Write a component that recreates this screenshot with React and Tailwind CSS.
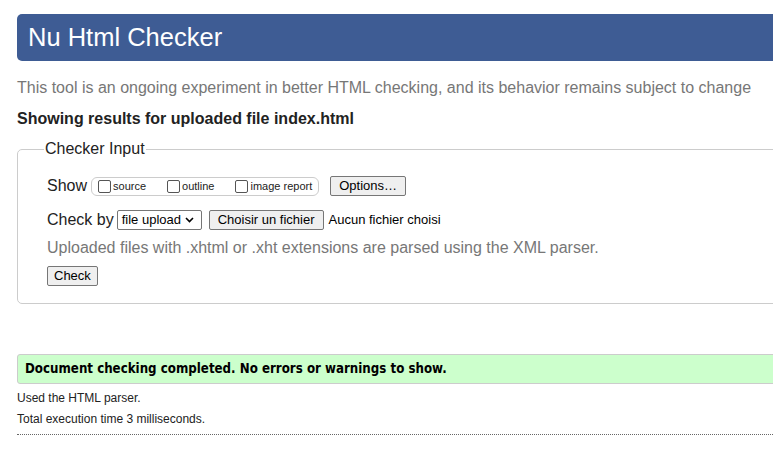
export default function App() {
  const arial = { fontFamily: '"Liberation Sans", Arial, sans-serif' };
  return (
    <div className="w-[773px] h-[455px] overflow-hidden bg-white" style={arial}>
      <div className="w-[1000px] pl-[17px] pt-[14px]">
        <h1 className="h-[47px] rounded-[5px] bg-[#3e5c94] text-white text-[25.5px] leading-[47px] pl-[11px]">
          Nu Html Checker
        </h1>
        <p className="mt-[17px] text-[16px] leading-[20px] text-[#777]">
          This tool is an ongoing experiment in better HTML checking, and its behavior remains subject to change
        </p>
        <p className="mt-[11px] text-[16px] leading-[20px] font-bold text-[#222]">
          Showing results for uploaded file index.html
        </p>
        <fieldset className="mt-[11px] border border-[#ccc] rounded-[5px] pl-[29px] pb-[16px] w-[900px]">
          <legend className="px-[1px] ml-[-3px] text-[16px] leading-[18px] text-[#222]">Checker Input</legend>
          <div className="flex items-center mt-[18px] h-[20px] text-[16px] text-[#222]">
            <span>Show</span>
            <div className="ml-[4px] flex items-center h-[19px] border border-[#ccc] rounded-[6px] pl-[6px] pr-[6px] text-[11px]">
              <label className="flex items-center"><span className="w-[13px] h-[13px] border border-[#555] rounded-[2px] bg-white mr-[2px]"></span>source</label>
              <label className="flex items-center ml-[21px]"><span className="w-[13px] h-[13px] border border-[#555] rounded-[2px] bg-white mr-[2px]"></span>outline</label>
              <label className="flex items-center ml-[21px]"><span className="w-[13px] h-[13px] border border-[#555] rounded-[2px] bg-white mr-[2px]"></span>image report</label>
            </div>
            <button className="ml-[11px] h-[20px] px-[8px] border border-[#767676] rounded-[2px] bg-[#efefef] text-[13px] text-black leading-[18px]">Options…</button>
          </div>
          <div className="flex items-center mt-[14px] h-[20px] text-[16px] text-[#222]">
            <span>Check by</span>
            <div className="ml-[3px] h-[20px] w-[85px] border border-[#767676] rounded-[2px] bg-white flex items-center pl-[4px] text-[13px] text-black">
              <span>file upload</span>
              <svg className="ml-[4px]" width="9" height="6" viewBox="0 0 9 6"><path d="M1 1l3.5 3.5L8 1" stroke="#000" strokeWidth="1.6" fill="none" /></svg>
            </div>
            <button className="ml-[7px] h-[20px] px-[8px] border border-[#767676] rounded-[2px] bg-[#efefef] text-[13px] text-black leading-[18px]">Choisir un fichier</button>
            <span className="ml-[5px] text-[13px] text-black">Aucun fichier choisi</span>
          </div>
          <p className="mt-[8px] text-[16px] leading-[20px] text-[#777]">
            Uploaded files with .xhtml or .xht extensions are parsed using the XML parser.
          </p>
          <button className="mt-[8px] h-[20px] px-[6px] border border-[#767676] rounded-[2px] bg-[#efefef] text-[13px] text-black leading-[18px]">Check</button>
        </fieldset>
        <div className="mt-[50px] h-[30px] border border-[#ccc] rounded-[3px] bg-[#ccffcc] flex items-center pl-[7px] text-[13.2px] font-bold text-black" style={{ fontFamily: '"DejaVu Sans Condensed", "DejaVu Sans", Verdana, sans-serif', fontStretch: 'condensed' }}>
          Document checking completed. No errors or warnings to show.
        </div>
        <p className="mt-[7px] text-[12px] leading-[14px] text-[#222]">Used the HTML parser.</p>
        <p className="mt-[7px] text-[12px] leading-[14px] text-[#222]">Total execution time 3 milliseconds.</p>
        <div className="mt-[8px] w-[756px] border-t border-dotted border-[#666]"></div>
      </div>
    </div>
  );
}
